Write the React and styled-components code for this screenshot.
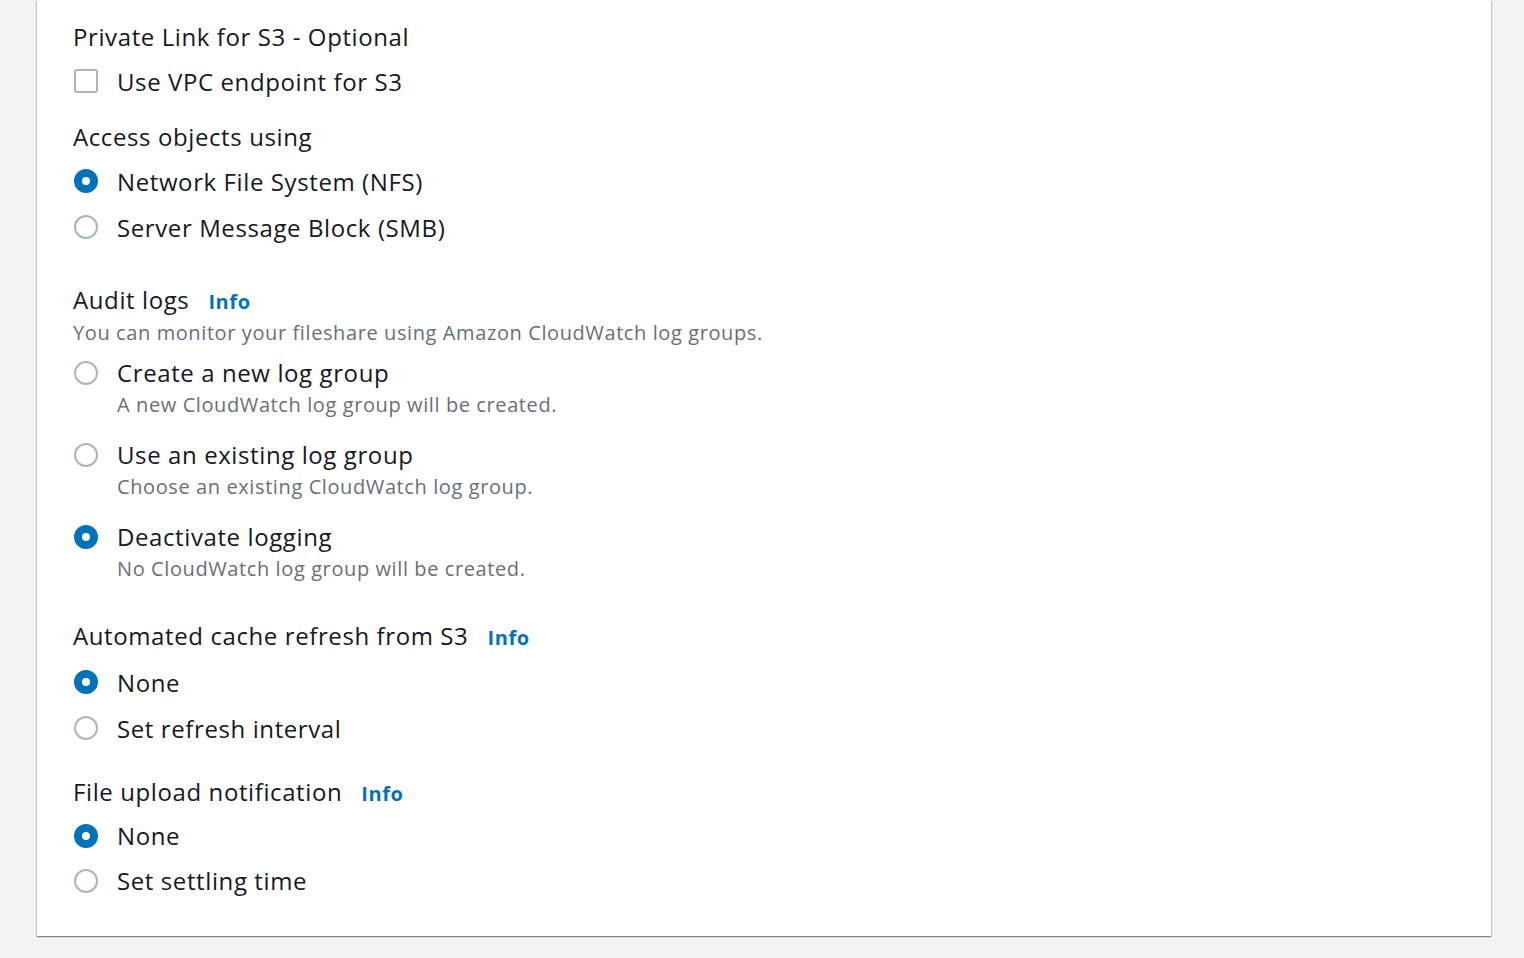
import styled, { createGlobalStyle } from 'styled-components';

const GlobalStyle = createGlobalStyle`
  html, body {
    margin: 0;
    padding: 0;
    background: #f2f3f3;
  }
  body {
    font-family: "Open Sans", "Liberation Sans", sans-serif;
    color: #16191f;
  }
`;

const Page = styled.div`
  padding: 0 33px 20px 37px;
  min-height: 958px;
  box-sizing: border-box;
`;

const Panel = styled.div`
  background: #fff;
  padding: 20px 36px 33px 37px;
  box-shadow: 0 1px 1px 0 rgba(0, 28, 36, 0.3), 1px 1px 1px 0 rgba(0, 28, 36, 0.15),
    -1px 1px 1px 0 rgba(0, 28, 36, 0.15);
`;

const Section = styled.div`
  display: flex;
  flex-direction: column;
  margin-top: ${(p) => p.$top || 0}px;
`;

const Title = styled.div`
  font-size: 24px;
  letter-spacing: 0.6px;
  line-height: 34px;
  margin-bottom: ${(p) => (p.$mb !== undefined ? p.$mb : 4)}px;
  margin-left: -1px;
  display: flex;
  align-items: baseline;
`;

const InfoLink = styled.a`
  font-size: 20px;
  letter-spacing: 0.6px;
  font-weight: 700;
  color: #0073bb;
  margin-left: 19px;
  text-decoration: none;
  cursor: pointer;
`;

const Desc = styled.div`
  font-size: 20px;
  letter-spacing: 0.6px;
  line-height: 28px;
  color: #687078;
  margin-left: -1px;
`;

const Row = styled.label`
  display: flex;
  align-items: center;
  height: ${(p) => p.$h || 46}px;
  gap: 19px;
  font-size: 24px;
  letter-spacing: 0.6px;
  cursor: pointer;
`;

const DescOptions = styled.div`
  display: flex;
  flex-direction: column;
  gap: 18px;
  margin-top: 9px;
`;

const DescOption = styled.label`
  display: grid;
  grid-template-columns: 24px 1fr;
  column-gap: 19px;
  align-items: center;
  cursor: pointer;
`;

const OptLabel = styled.span`
  font-size: 24px;
  letter-spacing: 0.6px;
  line-height: 34px;
`;

const OptSub = styled.span`
  grid-column: 2;
  font-size: 20px;
  letter-spacing: 0.6px;
  line-height: 30px;
  color: #687078;
`;

const Radio = styled.span`
  width: 24px;
  height: 24px;
  box-sizing: border-box;
  border-radius: 50%;
  flex-shrink: 0;
  background: #fff;
  border: ${(p) => (p.$checked ? '8px solid #0073bb' : '2px solid #aab7b8')};
`;

const Checkbox = styled.span`
  width: 24px;
  height: 24px;
  box-sizing: border-box;
  border-radius: 3px;
  flex-shrink: 0;
  border: 2px solid #aab7b8;
  background: #fff;
`;

const RadioRow = ({ checked, h, children }) => (
  <Row $h={h}>
    <Radio $checked={checked} />
    {children}
  </Row>
);

const logOptions = [
  { label: 'Create a new log group', sub: 'A new CloudWatch log group will be created.' },
  { label: 'Use an existing log group', sub: 'Choose an existing CloudWatch log group.' },
  { label: 'Deactivate logging', sub: 'No CloudWatch log group will be created.', checked: true },
];

export default function App() {
  return (
    <Page>
      <GlobalStyle />
      <Panel>
        <Section>
          <Title>Private Link for S3 - Optional</Title>
          <Row>
            <Checkbox />
            Use VPC endpoint for S3
          </Row>
        </Section>

        <Section $top={16}>
          <Title>Access objects using</Title>
          <RadioRow checked>Network File System (NFS)</RadioRow>
          <RadioRow>Server Message Block (SMB)</RadioRow>
        </Section>

        <Section $top={33}>
          <Title $mb={0}>
            Audit logs<InfoLink>Info</InfoLink>
          </Title>
          <Desc>You can monitor your fileshare using Amazon CloudWatch log groups.</Desc>
          <DescOptions>
            {logOptions.map((o) => (
              <DescOption key={o.label}>
                <Radio $checked={o.checked} />
                <OptLabel>{o.label}</OptLabel>
                <OptSub>{o.sub}</OptSub>
              </DescOption>
            ))}
          </DescOptions>
        </Section>

        <Section $top={35}>
          <Title>
            Automated cache refresh from S3<InfoLink>Info</InfoLink>
          </Title>
          <RadioRow checked>None</RadioRow>
          <RadioRow>Set refresh interval</RadioRow>
        </Section>

        <Section $top={24}>
          <Title $mb={2}>
            File upload notification<InfoLink>Info</InfoLink>
          </Title>
          <RadioRow checked h={45}>None</RadioRow>
          <RadioRow h={45}>Set settling time</RadioRow>
        </Section>
      </Panel>
    </Page>
  );
}
